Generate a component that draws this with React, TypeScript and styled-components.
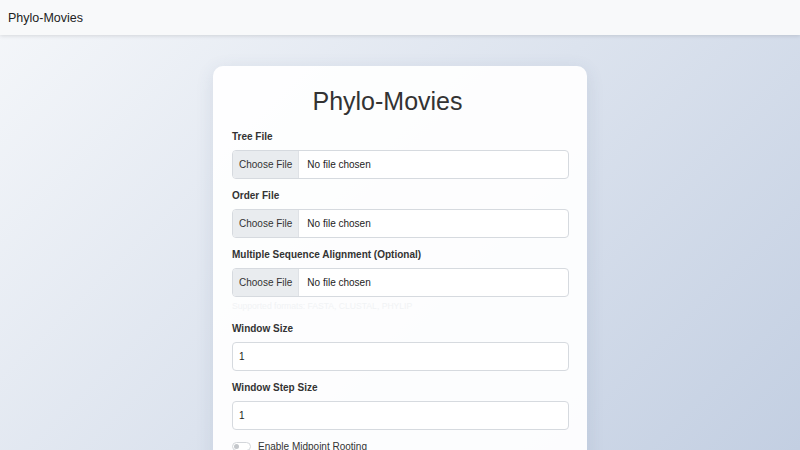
import React from 'react'
import styled, { createGlobalStyle } from 'styled-components'

const GlobalStyle = createGlobalStyle`
  html, body {
    margin: 0;
    padding: 0;
    height: 100%;
  }
  body {
    font-family: 'Liberation Sans', Arial, Helvetica, sans-serif;
    color: #333;
    background: linear-gradient(135deg, #f5f7fa 0%, #c3cfe2 100%);
    background-attachment: fixed;
    min-height: 450px;
    overflow: hidden;
  }
`

const Navbar = styled.nav`
  height: 35px;
  display: flex;
  align-items: center;
  padding: 0 8px;
  background: #f8f9fa;
  box-shadow: 0 1px 4px rgba(0, 0, 0, 0.12);
  font-size: 12.5px;
  color: #222;
`

const Main = styled.main`
  display: flex;
  justify-content: center;
  padding-top: 31px;
`

const Card = styled.div`
  width: 374px;
  box-sizing: border-box;
  padding: 20px 18px 20px 19px;
  background: rgba(255, 255, 255, 0.93);
  border-radius: 10px;
  box-shadow: 0 4px 18px rgba(60, 80, 120, 0.12);
`

const Title = styled.h1`
  margin: 0 0 13px;
  padding-right: 26px;
  text-align: center;
  font-size: 25px;
  line-height: 30px;
  font-weight: 400;
  color: #333;
`

const Group = styled.div`
  margin-bottom: 9px;
`

const Label = styled.label`
  display: block;
  padding-top: 1px;
  margin-bottom: 6px;
  font-size: 10px;
  line-height: 14px;
  font-weight: 700;
  color: #333;
`

const FileBox = styled.div`
  display: flex;
  align-items: center;
  height: 29px;
  box-sizing: border-box;
  border: 1px solid #d6dadf;
  border-radius: 4px;
  overflow: hidden;
  background: #fff;
  font-size: 10px;
  color: #222;
`

const FileButton = styled.span`
  display: flex;
  align-items: center;
  height: 100%;
  padding: 0 6px;
  background: #e9ecef;
  border-right: 1px solid #dfe2e6;
  color: #333;
`

const FileName = styled.span`
  margin-left: 8px;
`

const TextInput = styled.input`
  display: block;
  width: 100%;
  height: 29px;
  box-sizing: border-box;
  padding: 0 6px;
  border: 1px solid #d6dadf;
  border-radius: 4px;
  font-family: inherit;
  font-size: 10px;
  color: #222;
  background: #fff;
  outline: none;
`

const Helper = styled.div`
  margin-top: 3px;
  font-size: 8.6px;
  line-height: 12px;
  color: #f1f3f5;
`

const SwitchRow = styled.div`
  display: flex;
  align-items: center;
  gap: 7px;
  height: 14px;
  font-size: 10px;
  color: #333;
`

const Switch = styled.span`
  position: relative;
  width: 19px;
  height: 9px;
  box-sizing: border-box;
  border: 1px solid #d3d6da;
  border-radius: 6px;
  background: #fff;
  &::after {
    content: '';
    position: absolute;
    left: 1px;
    top: 1px;
    width: 5px;
    height: 5px;
    border-radius: 50%;
    background: #c4c7cb;
  }
`

const FileField = ({ label, helper }: { label: string; helper?: string }) => (
  <Group>
    <Label>{label}</Label>
    <FileBox>
      <FileButton>Choose File</FileButton>
      <FileName>No file chosen</FileName>
    </FileBox>
    {helper && <Helper>{helper}</Helper>}
  </Group>
)

const NumberField = ({ label, value }: { label: string; value: string }) => (
  <Group>
    <Label>{label}</Label>
    <TextInput type="text" defaultValue={value} />
  </Group>
)

const App = () => (
  <>
    <GlobalStyle />
    <Navbar>Phylo-Movies</Navbar>
    <Main>
      <Card>
        <Title>Phylo-Movies</Title>
        <FileField label="Tree File" />
        <FileField label="Order File" />
        <FileField
          label="Multiple Sequence Alignment (Optional)"
          helper="Supported formats: FASTA, CLUSTAL, PHYLIP"
        />
        <NumberField label="Window Size" value="1" />
        <NumberField label="Window Step Size" value="1" />
        <SwitchRow>
          <Switch />
          Enable Midpoint Rooting
        </SwitchRow>
      </Card>
    </Main>
  </>
)

export default App
